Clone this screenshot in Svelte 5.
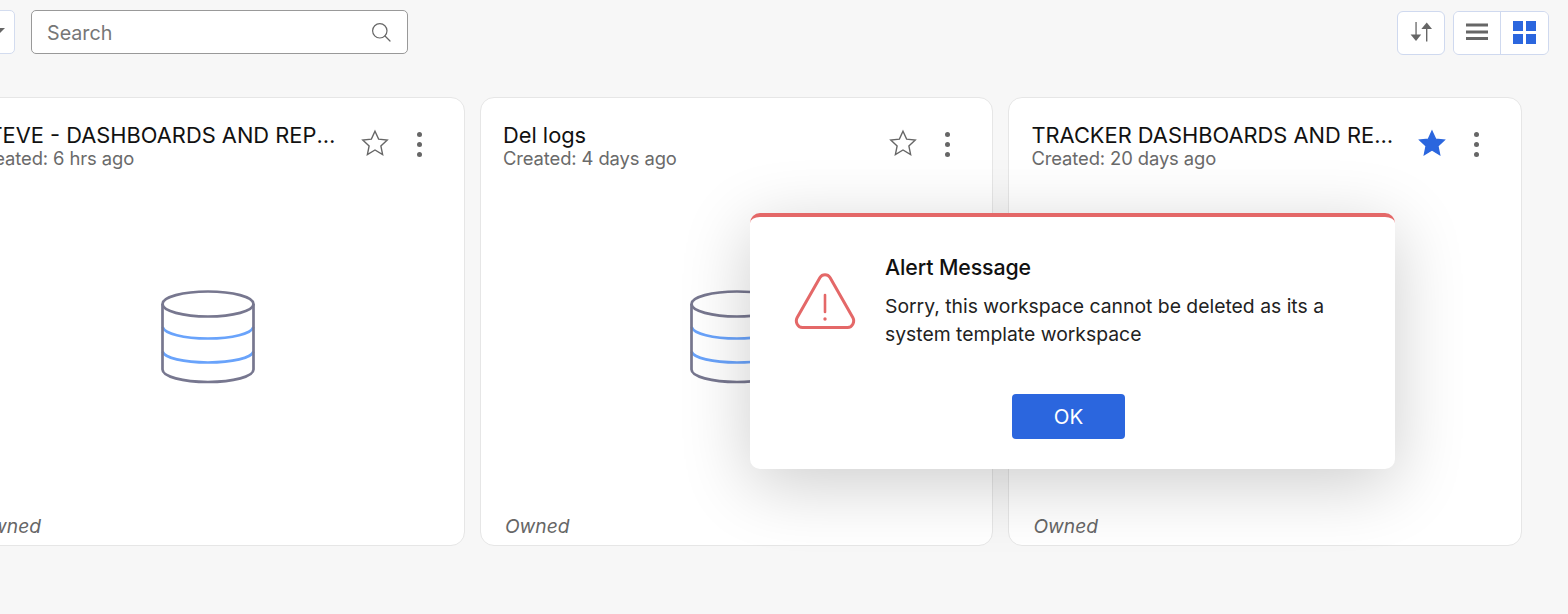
<script>
  const cards = [
    { title: 'STEVE - DASHBOARDS AND REPORTS', created: '6 hrs ago', starred: false },
    { title: 'Del logs', created: '4 days ago', starred: false },
    { title: 'TRACKER DASHBOARDS AND REPORTS', created: '20 days ago', starred: true }
  ];
  const starPath = 'M12 2.6l2.9 6.3 6.9.8-5.1 4.7 1.4 6.8L12 17.6l-6.1 3.6 1.4-6.8-5.1-4.7 6.9-.8z';
</script>

<div class="page">
  <header class="toolbar">
    <div class="left">
      <button class="dropdown" aria-label="Filter"><span class="caret"></span></button>
      <div class="search">
        <span>Search</span>
        <svg width="20" height="20" viewBox="0 0 20 20" fill="none" stroke="#666" stroke-width="1.2">
          <circle cx="8.8" cy="8.8" r="7.2" />
          <path d="M14 14l5 5" stroke-linecap="round" />
        </svg>
      </div>
    </div>
    <div class="right">
      <button class="tool sort" aria-label="Sort">
        <svg width="24" height="22" viewBox="0 0 24 22" fill="#666">
          <path d="M6.4 1h1.3v13.5h-1.3z" />
          <path d="M1.6 13.5h10.6L7 20z" />
          <path d="M17 7h1.4v13.500h-1.400z" />
          <path d="M12.400 8L17.700 1.500 23 8z" />
        </svg>
      </button>
      <div class="toggle">
        <button class="tool" aria-label="List view">
          <svg width="24" height="20" viewBox="0 0 24 20" fill="#666">
            <rect x="1" y="1.500" width="22" height="3" />
            <rect x="1" y="8.500" width="22" height="3" />
            <rect x="1" y="15" width="22" height="3" />
          </svg>
        </button>
        <button class="tool" aria-label="Grid view">
          <svg width="23" height="23" viewBox="0 0 23 23" fill="#2b66de">
            <rect width="10" height="10" />
            <rect x="13" width="10" height="10" />
            <rect y="13" width="10" height="10" />
            <rect x="13" y="13" width="10" height="10" />
          </svg>
        </button>
      </div>
    </div>
  </header>

  <section class="cards">
    {#each cards as card}
      <article class="card">
        <div class="card-head">
          <div class="info">
            <div class="title">{card.title}</div>
            <div class="created">Created: {card.created}</div>
          </div>
          <svg class="star" width="30" height="30" viewBox="0 0 24 24" fill={card.starred ? '#2b66de' : 'none'} stroke={card.starred ? '#2b66de' : '#666'} stroke-width="1.100">
            <path d={starPath} />
          </svg>
          <div class="more"><i></i><i></i><i></i></div>
        </div>
        <div class="card-body">
          <svg width="94" height="94" viewBox="0 0 94 94" fill="none" stroke-width="2.700">
            <path d="M1.500 37c2 6.500 21 11.500 45.500 11.500S90.500 43.500 92.500 37" stroke="#69a3fb" />
            <path d="M1.500 61.500c2 6.500 21 11 45.500 11s43.500-4.500 45.500-11" stroke="#69a3fb" />
            <ellipse cx="47" cy="14" rx="45.500" ry="12.500" stroke="#77778f" />
            <path d="M1.500 14v65.500c0 7 20 12.500 45.500 12.500s45.500-5.500 45.500-12.500V14" stroke="#77778f" />
          </svg>
        </div>
        <div class="owned">Owned</div>
      </article>
    {/each}
  </section>

  <div class="modal" role="alertdialog">
    <div class="modal-main">
      <svg class="warn" width="62" height="58" viewBox="0 0 62 58" fill="none" stroke="#e46868" stroke-width="3">
        <path d="M26 4.500c2.300-3.600 7.700-3.600 10 0l22.800 40c2.300 4.200-.4 10-5.200 10H8.400c-4.800 0-7.500-5.800-5.200-10z" stroke-linejoin="round" />
        <path d="M31 22v17" stroke-width="2.600" stroke-linecap="round" />
        <circle cx="31" cy="46" r="1.700" fill="#e46868" stroke="none" />
      </svg>
      <div class="modal-text">
        <h2>Alert Message</h2>
        <p>Sorry, this workspace cannot be deleted as its a system template workspace</p>
      </div>
    </div>
    <div class="modal-foot">
      <button class="ok">OK</button>
    </div>
  </div>
</div>

<style>
  :global(body) {
    margin: 0;
    background: #f7f7f7;
    overflow: hidden;
  }

  .page {
    position: relative;
    width: 1568px;
    height: 614px;
    overflow: hidden;
    font-family: Inter, "Noto Sans", sans-serif;
    color: #111;
  }

  button {
    font-family: inherit;
    padding: 0;
    cursor: pointer;
  }

  .toolbar {
    display: flex;
    justify-content: space-between;
    padding: 10px 19px 0 0;
    height: 97px;
    box-sizing: border-box;
  }

  .left {
    display: flex;
    gap: 16px;
    margin-left: -30px;
  }

  .dropdown {
    width: 45px;
    height: 44px;
    background: #fff;
    border: 1px solid #d3dcef;
    border-radius: 5px;
    display: flex;
    align-items: center;
    justify-content: flex-end;
    padding-right: 9px;
    box-sizing: border-box;
  }

  .caret {
    width: 0;
    height: 0;
    border-left: 5px solid transparent;
    border-right: 5px solid transparent;
    border-top: 5px solid #666;
    margin-top: -4px;
  }

  .search {
    width: 377px;
    height: 44px;
    box-sizing: border-box;
    background: #fff;
    border: 1px solid #999;
    border-radius: 5px;
    display: flex;
    align-items: center;
    justify-content: space-between;
    padding: 0 16px 0 15px;
    color: #777;
  }

  .search span {
    font-size: 19.700px;
    padding-top: 2px;
  }

  .right {
    display: flex;
    gap: 8px;
    padding-top: 1px;
  }

  .tool {
    width: 48px;
    height: 44px;
    background: #fff;
    border: 0;
    padding-bottom: 2px;
    display: flex;
    align-items: center;
    justify-content: center;
  }

  .sort {
    border: 1px solid #cfd9ef;
    border-radius: 6px;
    box-sizing: border-box;
  }

  .toggle {
    display: flex;
    height: 44px;
    box-sizing: border-box;
    border: 1px solid #cfd9ef;
    border-radius: 6px;
    overflow: hidden;
    align-items: stretch;
  }

  .toggle .tool {
    height: 42px;
    width: 46px;
  }

  .toggle .tool + .tool {
    border-left: 1px solid #cfd9ef;
    width: 48px;
  }

  .cards {
    display: flex;
    gap: 15px;
    margin-left: -48.600px;
  }

  .card {
    flex: none;
    width: 513.500px;
    height: 449px;
    box-sizing: border-box;
    background: #fff;
    border: 1px solid #e6e6e6;
    border-radius: 14px;
    display: flex;
    flex-direction: column;
    padding: 24px 22px 7px;
  }

  .card-head {
    display: flex;
    align-items: flex-start;
    height: 48px;
  }

  .info {
    width: 372px;
    margin-right: 1px;
    flex: none;
  }

  .title {
    font-size: 21.850px;
    line-height: 26px;
    white-space: nowrap;
    overflow: hidden;
    text-overflow: ellipsis;
  }

  .created {
    font-size: 18.400px;
    line-height: 22px;
    margin-top: -1px;
    color: #6a6a6a;
    letter-spacing: -0.1px;
  }

  .star {
    flex: none;
    margin-left: 12.500px;
    margin-top: 6px;
  }

  .more {
    margin-left: 27px;
    margin-top: 10px;
    display: flex;
    flex-direction: column;
    gap: 5px;
  }

  .more i {
    display: block;
    width: 5px;
    height: 5px;
    border-radius: 50%;
    background: #666;
  }

  .card-body {
    flex: 1;
    display: flex;
    justify-content: center;
    align-items: flex-start;
    padding: 120px 0 0;
  }

  .owned {
    font-size: 19.200px;
    font-style: italic;
    line-height: 24px;
    color: #666;
    margin-left: 2px;
  }

  .modal {
    position: absolute;
    left: 750px;
    top: 213px;
    width: 645px;
    height: 256px;
    box-sizing: border-box;
    background: #fff;
    border-top: 4px solid #e46868;
    border-radius: 10px;
    box-shadow: 0 15px 70px rgba(0, 0, 0, 0.2);
  }

  .modal-main {
    display: flex;
    padding: 36px 40px 0 45px;
    height: 133px;
    box-sizing: border-box;
  }

  .warn {
    flex: none;
    margin-top: 20px;
    margin-left: -1px;
    width: 62px;
    height: 58px;
  }

  .modal-text {
    margin-left: 29px;
  }

  h2 {
    margin: 0 0 11px;
    font-size: 21.300px;
    line-height: 28px;
    font-weight: 500;
    letter-spacing: -0.1px;
  }

  p {
    margin: 0;
    font-size: 19.350px;
    line-height: 28px;
    color: #222;
    width: 460px;
  }

  .modal-foot {
    display: flex;
    margin-top: 44px;
    padding-left: 262px;
  }

  .ok {
    width: 113px;
    height: 45px;
    background: #2b66de;
    border: 0;
    border-radius: 4px;
    color: #fff;
    font-size: 20.500px;
  }
</style>
